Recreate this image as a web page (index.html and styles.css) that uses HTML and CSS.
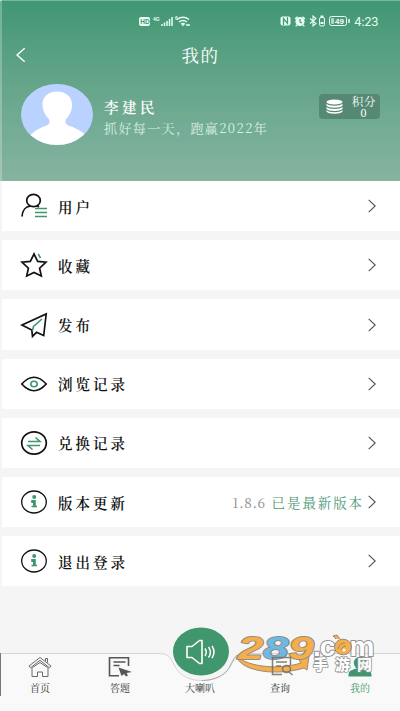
FILE: index.html
```html
<!DOCTYPE html>
<html lang="zh-CN">
<head>
<meta charset="utf-8">
<title>我的</title>
<link rel="stylesheet" href="styles.css">
</head>
<body>
<div class="screen">
  <header class="hero">
    <div class="status">
      <svg class="status-left" viewBox="0 0 52 12" width="52" height="12" fill="none" stroke="#e6fff4">
        <rect x="0" y="2" width="11" height="9" rx="2" fill="#e6fff4" stroke="none"/>
        <text x="1.3" y="8.9" font-size="6.5" font-weight="700" fill="#459775" stroke="none">HD</text>
        <text x="14" y="5.5" font-size="5" font-weight="700" fill="#e6fff4" stroke="none">4G</text>
        <path d="M23 11V9M25.500 11V7.500M28 11V6M30.500 11V4M33 11V2" stroke-width="1.5"/>
        <text x="36" y="5" font-size="5" font-weight="700" fill="#e6fff4" stroke="none">6</text>
        <path d="M38 4.500q6-4.500 12 0M40 7q4-3 8 0M42 9.200q2-1.500 4 0" stroke-width="1.4"/>
        <path d="M43 10h2M47 10h4" stroke-width="1.500"/>
      </svg>
      <div class="status-right">
        <svg viewBox="0 0 70 12" width="70" height="12" fill="none" stroke="#e6fff4">
          <rect x="0.500" y="1.500" width="10" height="9" rx="2" fill="#e6fff4" stroke="none"/>
          <path d="M3.500 10V3.500l4 5V2" stroke="#459775" stroke-width="1.300"/>
          <circle cx="20" cy="6.500" r="4.600" fill="#e6fff4" stroke="none"/>
          <path d="M15 4l2.500-2.300M25 4l-2.500-2.300M17 10l-1.300 1.300M23 10l1.300 1.300" stroke-width="1.300"/>
          <path d="M20 4v3l2 1" stroke="#459775" stroke-width="1.200"/>
          <path d="M30 3.500l6 5-3 2.500V1l3 2.500-6 5" stroke-width="1.100"/>
          <rect x="39.500" y="2.500" width="5" height="8.500" rx="1.500"/><path d="M40.500 1.500h3M40.500 8h3" stroke-width="2"/>
          <rect x="49.500" y="1.500" width="17" height="9" rx="2"/>
          <rect x="51" y="3" width="3" height="6" rx="1" fill="#b6d7c8" stroke="none"/>
          <path d="M69 4v4" stroke-width="1.500"/>
          <text x="55" y="9" font-size="8" font-weight="700" fill="#f2fff9" stroke="none">49</text>
        </svg>
        <span class="clock">4:23</span>
      </div>
    </div>
    <div class="titlebar">
      <svg class="back" viewBox="0 0 10 16" width="10" height="16"><path d="M8.700 1.200L1 8l7.700 6.800" fill="none" stroke="#fff" stroke-width="1.500"/></svg>
      <h1>我的</h1>
    </div>
    <div class="profile">
      <svg class="avatar" viewBox="0 0 72 61" width="72" height="61">
        <defs><clipPath id="face"><ellipse cx="36" cy="30.500" rx="36" ry="30.500"/></clipPath></defs>
        <g clip-path="url(#face)"><rect width="72" height="61" fill="#bad2ff"/>
        <path d="M36 7.500c-9 0-14.500 5.500-14.500 13 0 6 2.500 10 5.500 13.500 2.500 3 2 6-1.500 7.500C19 43.500 14 46.500 9 51.500v13h56v-13C60 46.500 54 43.500 47.500 41.500c-3.500-1.500-4-4.500-1.500-7.500 3-3.500 5-7.500 5-13.500 0-7.500-6-13-15-13z" fill="#fff"/></g>
      </svg>
      <div class="who"><div class="name">李建民</div><div class="motto">抓好每一天，跑赢2022年</div></div>
      <div class="points">
        <svg viewBox="0 0 17 15" width="17" height="15" fill="#fff"><ellipse cx="8.500" cy="3" rx="8" ry="2.600"/><path d="M.5 4.800c2 2.600 14 2.600 16 0v2c-2 2.600-14 2.600-16 0zM.5 8.100c2 2.600 14 2.600 16 0v1.900c-2 2.600-14 2.600-16 0zM.5 11.300c2 2.600 14 2.600 16 0v1.400c-2 2.600-14 2.600-16 0z"/></svg>
        <div class="points-text"><span>积分</span><span class="zero">0</span></div>
      </div>
    </div>
  </header>

  <main class="menu">
    <div class="row">
      <svg class="ico" viewBox="0 0 26 26"><ellipse cx="12.500" cy="7.500" rx="6.800" ry="6.200"/><path d="M1 23.500C1.500 17 5 13.500 9 13.200M16 12.800l2 1.200"/><path class="g" d="M14 15.500h12M14 19.500h12M14 23.500h12"/></svg>
      <span class="label">用户</span><svg class="chev" viewBox="0 0 8 14"><path d="M.7.900L7.200 7 .7 13.100"/></svg>
    </div>
    <div class="row">
      <svg class="ico" viewBox="0 0 26 26"><path d="M13 2l3.700 7.400 8.300.8-6.400 6 1.700 7.800L13 20.500 5.700 24l1.700-7.800-6.400-6 8.300-.8z"/><path class="g" d="M17.200 2l2.300 4"/></svg>
      <span class="label">收藏</span><svg class="chev" viewBox="0 0 8 14"><path d="M.7.900L7.200 7 .7 13.100"/></svg>
    </div>
    <div class="row">
      <svg class="ico" viewBox="0 0 26 26"><path d="M1 13L25.200 2l-2.500 21.500-7.200-3.200-4 4-.7-6.300z"/><path class="g" d="M11.500 18.500l1-4 8.500-7.500"/></svg>
      <span class="label">发布</span><svg class="chev" viewBox="0 0 8 14"><path d="M.7.900L7.200 7 .7 13.100"/></svg>
    </div>
    <div class="row">
      <svg class="ico" viewBox="0 0 26 26"><path d="M.8 13Q13-.5 25.200 13 13 26.500.8 13z"/><ellipse class="g" cx="13" cy="13" rx="3.200" ry="2.800"/></svg>
      <span class="label">浏览记录</span><svg class="chev" viewBox="0 0 8 14"><path d="M.7.900L7.200 7 .7 13.100"/></svg>
    </div>
    <div class="row">
      <svg class="ico" viewBox="0 0 26 26"><ellipse cx="13" cy="13" rx="12.300" ry="11.200"/><path class="g" d="M7 11.500h12l-4.500-4M19 15.500H7l4.500 4"/></svg>
      <span class="label">兑换记录</span><svg class="chev" viewBox="0 0 8 14"><path d="M.7.900L7.200 7 .7 13.100"/></svg>
    </div>
    <div class="row">
      <svg class="ico thin" viewBox="0 0 26 26"><ellipse cx="13" cy="13" rx="12.300" ry="11"/><circle class="dot" cx="13.200" cy="8" r="2"/><path class="g bold" d="M10.200 12.500h3.200v5"/><path class="g" d="M10.500 17.500h5.500"/></svg>
      <span class="label">版本更新</span><span class="version"><span class="num">1.8.6</span>已是最新版本</span><svg class="chev" viewBox="0 0 8 14"><path d="M.7.900L7.200 7 .7 13.100"/></svg>
    </div>
    <div class="row">
      <svg class="ico thin" viewBox="0 0 26 26"><ellipse cx="13" cy="13" rx="12.300" ry="11"/><circle class="dot" cx="13.200" cy="8" r="2"/><path class="g bold" d="M10.200 12.500h3.200v5"/><path class="g" d="M10.500 17.500h5.500"/></svg>
      <span class="label">退出登录</span><svg class="chev" viewBox="0 0 8 14"><path d="M.7.900L7.200 7 .7 13.100"/></svg>
    </div>
  </main>

  <nav class="tabs">
    <svg class="tabs-shape" viewBox="0 0 400 92" width="400" height="92">
      <path d="M-2 34.500H160C174 34.500 171 47 181 55 188 60 194 61.500 202 61.500 212 61.500 221 58 226 53 234 45 233 34.500 247 34.500H402V95H-2z" fill="#f9f9f9" stroke="#d6d6d6"/>
      <path d="M.5 34v43" stroke="#777"/>
      <path d="M202 61.500C212 61.500 221 58 226 53 231 48 232 40 237 36" fill="none" stroke="#aaa"/>
      <ellipse cx="201" cy="32.500" rx="28" ry="24" fill="#40976d"/>
      <path d="M187 27.500h5l7.500-6h2.500v23h-2.500L192 38.500h-5z" fill="none" stroke="#fff" stroke-width="1.600" stroke-linejoin="round"/>
      <path d="M205 29.500q2.500 4 0 7.500M208.500 28q4 5.500 0 10.500M212 27q4 6 0 12" fill="none" stroke="#fff" stroke-width="1.500"/>
    </svg>
    <div class="tab">
      <svg viewBox="0 0 24 22" fill="none" stroke="#696969" stroke-width="1"><path d="M1 10L12 1.500 23 10l-1.500 1.800L12 4.300l-9.500 7.500zM4 11.500v9h5.500V16h5v4.500H20v-9M4.500 11.500L12 6.500l7.500 5M17.500 5V2.500h2v4"/></svg>
      <span>首页</span>
    </div>
    <div class="tab">
      <svg viewBox="0 0 24 22" fill="none" stroke="#555" stroke-width="1.600"><path d="M20.500 10V1.800H1.500v18H11M5.500 6h12M5.500 9.500h6"/><path d="M10.500 11.500L24 16l-5.500 1 1.500 2.500-2 1-2-2.500-2.500 2z" fill="#555" stroke="none"/></svg>
      <span>答题</span>
    </div>
    <div class="tab"><i class="spacer"></i><span>大喇叭</span></div>
    <div class="tab">
      <svg viewBox="0 0 24 22"></svg>
      <span>查询</span>
    </div>
    <div class="tab active">
      <svg viewBox="0 0 24 22" fill="#40976d"><ellipse cx="12" cy="7" rx="6.200" ry="6.300"/><path d="M.5 20.500v-2c0-4 4-4.500 7.500-6h8c3.500 1.500 7.500 2 7.500 6v2z"/></svg>
      <span>我的</span>
    </div>
  </nav>

  <svg class="mark" viewBox="0 0 142 42" width="142" height="42">
    <path d="M1 23C14 33 43 36 65 29L63 26 73 22 71 36 68 34C42 42 6 38 1 23z" stroke="#8b8378" fill="#f7a93c"/>
    <text class="digits" transform="translate(2 25) scale(1.42 1)"><tspan>2</tspan><tspan class="blue">8</tspan><tspan>9</tspan></text>
    <text class="com" transform="translate(77 21.500)">.c</text>
    <text class="com" transform="translate(113.500 21.500)">m</text>
    <g fill="none">
      <ellipse cx="107" cy="13" rx="8.500" ry="7.800" fill="#f7a93c" stroke="#8b8378"/>
      <path d="M102 15q1-6 7-6M105 16q1-4 5-4" stroke="#8b8378"/><circle cx="108" cy="16" r="1.500" fill="#fff"/>
      <path d="M100 5l-3-3 4-1 3 4" fill="#f7a93c" stroke="#8b8378"/>
    </g>
    <g transform="translate(34 22)" fill="none" stroke="#6b5f50" stroke-opacity=".85" stroke-width="1.500"><path d="M20.500 9V1.500h-18v17H12M6 6h11M6 10h5"/><ellipse cx="16.500" cy="13" rx="4" ry="3.500"/><path d="M19 16l3.500 3"/></g>
    <text class="mark-text" x="77" y="35.500">手游网</text>
  </svg>
</div>
</body>
</html>
```
FILE: styles.css
```css
* { box-sizing: border-box; }
body { margin: 0; background: #f5f5f5; }
.screen {
  position: relative;
  width: 400px;
  height: 711px;
  overflow: hidden;
  display: flex;
  flex-direction: column;
  font-family: "Noto Serif CJK SC", "Noto Serif SC", "Noto Sans CJK SC", serif;
  color: #111;
}
svg { display: block; flex: none; }
svg text { font-family: "Liberation Sans", sans-serif; }

.hero {
  height: 181px;
  flex: none;
  border-left: 2px solid rgba(255, 255, 255, .25);
  border-top: 1px solid #78b99b;
  background: linear-gradient(#409773, #62a488 42%, #86b4a1);
  color: #fff;
}
.status {
  height: 38px;
  padding: 14px 22px 0 137px;
  display: flex;
  justify-content: space-between;
}
.status-right { display: flex; gap: 4px; }
.clock { font: 12px/13px Inter, sans-serif; letter-spacing: -.5px; width: 24px; white-space: nowrap; color: #e6fff4; }
.titlebar { height: 32px; padding: 0 14px; display: flex; align-items: center; }
.titlebar h1 {
  flex: 1;
  margin: 0 14px 0 0;
  padding-left: 3px;
  text-align: center;
  font-size: 17.5px;
  line-height: 24px;
  font-weight: 400;
  letter-spacing: 1.5px;
}
.profile { display: flex; padding: 13px 20px 0 19px; align-items: flex-start; }
.who { margin: 13px 0 0 11px; flex: 1; white-space: nowrap; }
.name { font-size: 14.5px; line-height: 20px; font-weight: 600; letter-spacing: 3.5px; }
.motto { font-size: 13px; line-height: 20px; letter-spacing: 1.4px; color: #d8eee4; margin-top: 1px; }
.points {
  width: 61px;
  height: 25px;
  margin-top: 10px;
  padding: 0 4px 0 7px;
  display: flex;
  align-items: center;
  justify-content: space-between;
  border-radius: 4px;
  background: #568974;
}
.points-text { display: flex; flex-direction: column; align-items: center; font-size: 11.5px; line-height: 12px; letter-spacing: .6px; }
.zero { font: 12px/12px "Liberation Serif", serif; }

.menu { display: flex; flex-direction: column; gap: 8.9px; margin-left: 2px; }
.row { height: 50.3px; padding: 0 24px 0 19px; display: flex; align-items: center; background: #fff; }
.ico { width: 26px; height: 26px; overflow: visible; fill: none; stroke: #111; stroke-width: 1.7; }
.thin { stroke-width: 1.3; }
.ico .g { stroke: #40976d; stroke-width: 1.6; }
.ico .bold { stroke-width: 2.8; }
.ico .dot { fill: #40976d; stroke: none; }
.label { flex: 1; margin: 1px 0 0 11px; font-size: 14.5px; line-height: 20px; font-weight: 600; letter-spacing: 3px; white-space: nowrap; }
.version { font-size: 13.5px; line-height: 20px; letter-spacing: 1.9px; color: #4f9878; margin-right: 4px; white-space: nowrap; }
.num { color: #8e8e8e; letter-spacing: .6px; margin-right: 6px; }
.chev { width: 8px; height: 14px; fill: none; stroke: #555; stroke-width: 1.2; }

.tabs { position: relative; margin-top: auto; height: 58px; display: flex; }
.tabs-shape { position: absolute; left: 0; bottom: 0; }
.tab {
  position: relative;
  flex: 1;
  padding-top: 3px;
  display: flex;
  flex-direction: column;
  align-items: center;
  font-size: 10px;
  line-height: 14px;
  color: #333;
  white-space: nowrap;
}
.tab svg, .spacer { width: 24px; height: 22px; }
.tab span { margin-top: 3px; }
.active { color: #40976d; }
.mark { position: absolute; left: 236px; top: 634px; opacity: .92; overflow: visible; }
.mark text { paint-order: stroke; stroke-linejoin: round; }
.mark .digits { font: italic 700 32px "Liberation Sans", sans-serif; fill: #f7a93c; stroke: #8b8378; stroke-width: 1.8px; }
.mark .blue { fill: #63b3e4; }
.mark .com { font: 700 28px "Liberation Sans", sans-serif; letter-spacing: -1px; fill: #fff; stroke: #8b8b8b; stroke-width: 2px; }
.mark .mark-text {
  font: 900 15px "Noto Sans CJK SC", sans-serif;
  letter-spacing: 7px;
  fill: #fff;
  stroke: #8b8b8b;
  stroke-width: 1.6px;
}
```
